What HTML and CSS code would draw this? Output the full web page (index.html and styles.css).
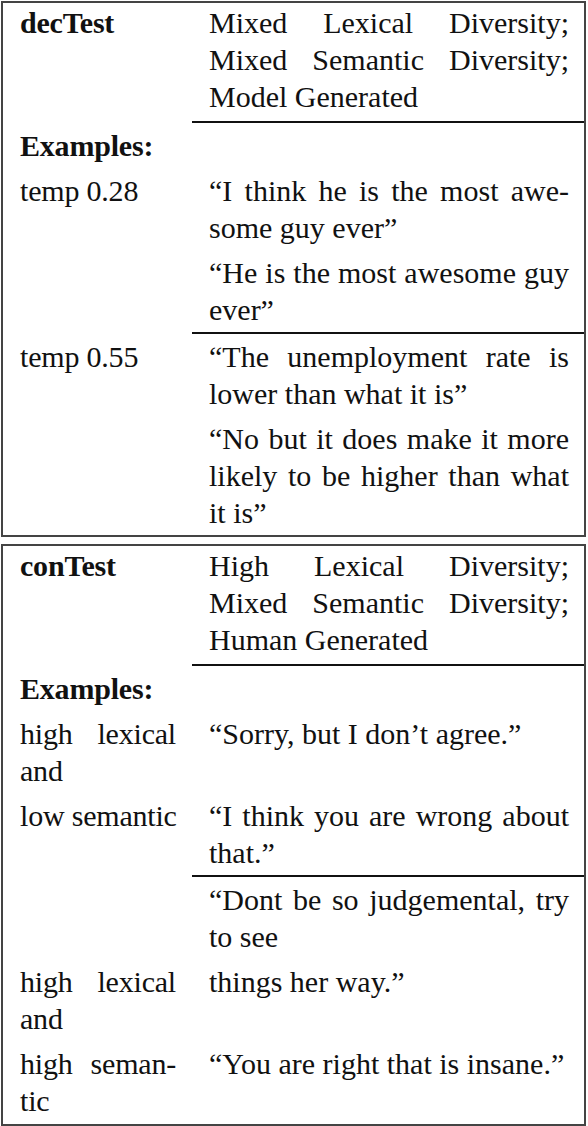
FILE: index.html
```html
<!DOCTYPE html>
<html>
<head>
<meta charset="utf-8">
<link rel="stylesheet" href="styles.css">
</head>
<body>
<div class="page">
  <div class="box">
    <div class="row">
      <div class="c1"><span class="ln"><b>decTest</b></span></div>
      <div class="c2">
        <span class="ln j">Mixed Lexical Diversity;</span>
        <span class="ln j">Mixed Semantic Diversity;</span>
        <span class="ln">Model Generated</span>
      </div>
    </div>
    <div class="row rule">
      <div class="c1"><span class="ln"><b>Examples:</b></span></div>
      <div class="c2"></div>
    </div>
    <div class="row">
      <div class="c1"><span class="ln">temp 0.28</span></div>
      <div class="c2">
        <span class="ln j">“I think he is the most awe-</span>
        <span class="ln">some guy ever”</span>
      </div>
    </div>
    <div class="row">
      <div class="c1"></div>
      <div class="c2">
        <span class="ln j">“He is the most awesome guy</span>
        <span class="ln">ever”</span>
      </div>
    </div>
    <div class="row rule">
      <div class="c1"><span class="ln">temp 0.55</span></div>
      <div class="c2">
        <span class="ln j">“The unemployment rate is</span>
        <span class="ln">lower than what it is”</span>
      </div>
    </div>
    <div class="row">
      <div class="c1"></div>
      <div class="c2">
        <span class="ln j">“No but it does make it more</span>
        <span class="ln j">likely to be higher than what</span>
        <span class="ln">it is”</span>
      </div>
    </div>
  </div>

  <div class="box">
    <div class="row">
      <div class="c1"><span class="ln"><b>conTest</b></span></div>
      <div class="c2">
        <span class="ln j">High Lexical Diversity;</span>
        <span class="ln j">Mixed Semantic Diversity;</span>
        <span class="ln">Human Generated</span>
      </div>
    </div>
    <div class="row rule">
      <div class="c1"><span class="ln"><b>Examples:</b></span></div>
      <div class="c2"></div>
    </div>
    <div class="row">
      <div class="c1">
        <span class="ln j">high lexical</span>
        <span class="ln">and</span>
      </div>
      <div class="c2">
        <span class="ln">“Sorry, but I don’t agree.”</span>
      </div>
    </div>
    <div class="row">
      <div class="c1"><span class="ln">low semantic</span></div>
      <div class="c2">
        <span class="ln j">“I think you are wrong about</span>
        <span class="ln">that.”</span>
      </div>
    </div>
    <div class="row rule">
      <div class="c1"></div>
      <div class="c2">
        <span class="ln j">“Dont be so judgemental, try</span>
        <span class="ln">to see</span>
      </div>
    </div>
    <div class="row">
      <div class="c1">
        <span class="ln j">high lexical</span>
        <span class="ln">and</span>
      </div>
      <div class="c2">
        <span class="ln">things her way.”</span>
      </div>
    </div>
    <div class="row">
      <div class="c1">
        <span class="ln j">high seman-</span>
        <span class="ln">tic</span>
      </div>
      <div class="c2">
        <span class="ln">“You are right that is insane.”</span>
      </div>
    </div>
  </div>
</div>
</body>
</html>
```

FILE: styles.css
```css
html, body {
  margin: 0;
  padding: 0;
  background: #ffffff;
}

.page {
  padding: 1px 2px 0 1px;
  font-family: "Liberation Serif", "Times New Roman", serif;
  font-size: 30px;
  line-height: 37px;
  color: #111111;
}

.box {
  border: 2px solid #444444;
  margin-bottom: 7px;
}

.row {
  display: grid;
  grid-template-columns: 189px 1fr;
}

.c1,
.c2 {
  padding: 4px 15px 4px 17px;
}

.c1 {
  padding-right: 16px;
  letter-spacing: -0.2px;
}

.row:first-child .c1,
.row:first-child .c2 {
  padding-top: 1px;
  padding-bottom: 6px;
}

.box + .box .row:last-child .c1,
.box + .box .row:last-child .c2 {
  padding-bottom: 5px;
}

.rule .c1 {
  border-top: 2px solid transparent;
}

.rule .c2 {
  border-top: 2px solid #111111;
}

.ln {
  display: block;
  text-align: left;
  white-space: nowrap;
}

.ln.j {
  text-align: justify;
  text-align-last: justify;
  white-space: normal;
}

b {
  font-weight: bold;
}
```
